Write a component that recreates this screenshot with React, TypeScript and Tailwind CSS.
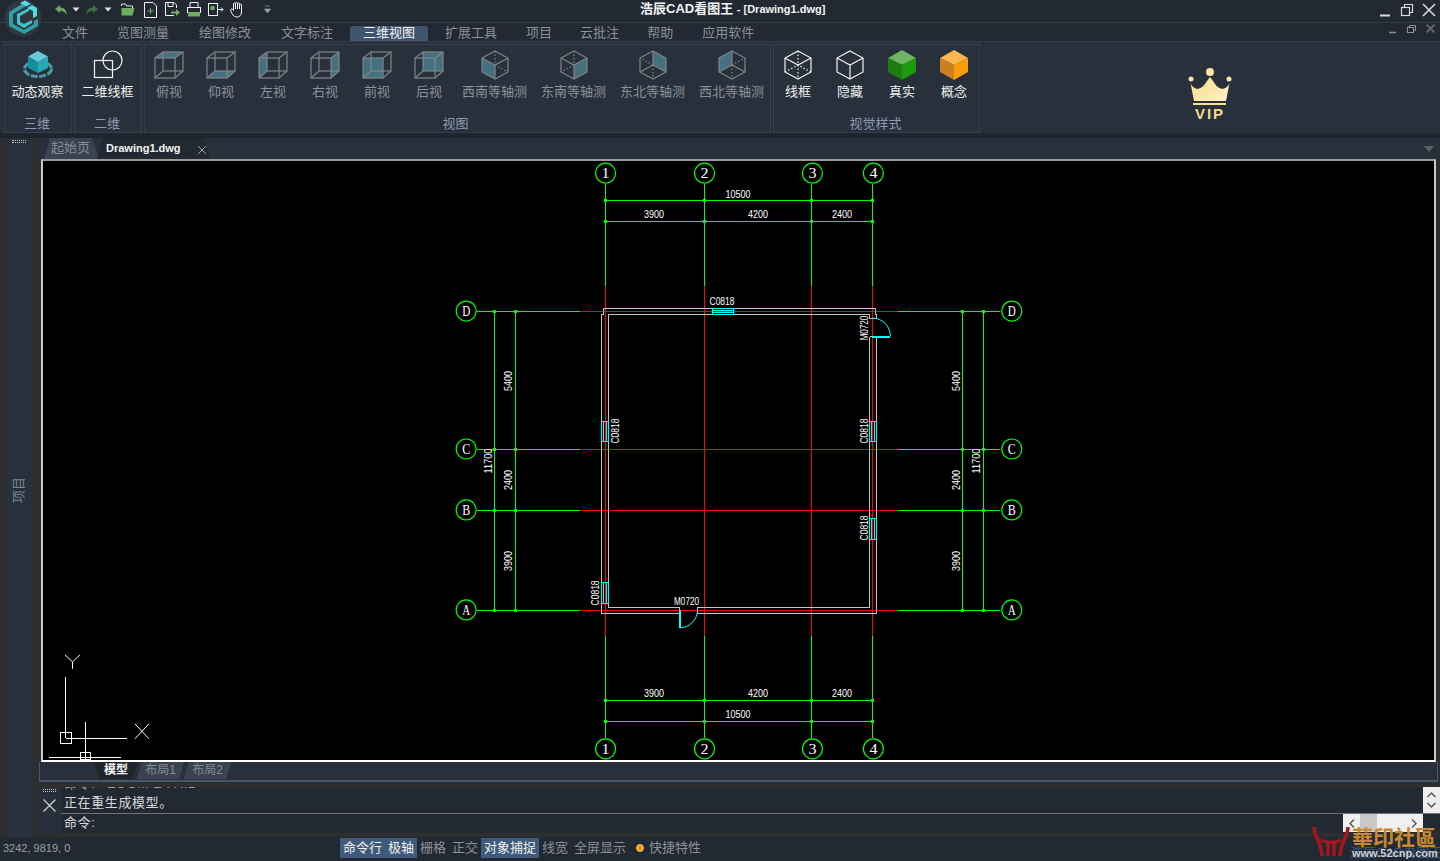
import type { ReactNode } from "react";

const STROKE = "#7f8488";
const FACE = "#44707f";

type Face = "top" | "bottom" | "left" | "right" | "front" | "back";

const faceShape: Record<Face, string> = {
  top: "1,7 9,1 29,1 21,7",
  bottom: "1,27 9,20 29,20 21,27",
  left: "1,7 9,1 9,20 1,27",
  right: "21,7 29,1 29,20 21,27",
  front: "1,7 21,7 21,27 1,27",
  back: "9,1 29,1 29,20 9,20",
};

function BoxIcon({ face }: { face: Face }) {
  return (
    <svg width="30" height="28" viewBox="0 0 30 28" fill="none" stroke={STROKE} strokeWidth="1.2">
      <polygon points={faceShape[face]} fill={FACE} stroke="none" />
      <rect x="1" y="7" width="20" height="20" />
      <rect x="9" y="1" width="20" height="19" />
      <path d="M1 7 9 1M21 7 29 1M21 27 29 20M1 27 9 20" />
    </svg>
  );
}

type Corner = "sw" | "se" | "ne" | "nw";

const cornerFill: Record<Corner, string> = {
  sw: "1,8 14,15 14,29 1,22",
  se: "27,8 14,15 14,29 27,22",
  ne: "14,1 27,8 27,22 14,15",
  nw: "14,1 1,8 1,22 14,15",
};

const cornerSolid: Record<Corner, string> = {
  sw: "M1 8 14 15 27 8M14 15V29",
  se: "M1 8 14 15 27 8M14 15V29",
  ne: "M14 1V15M1 22 14 15 27 22",
  nw: "M14 1V15M1 22 14 15 27 22",
};

const cornerDots: Record<Corner, string> = {
  sw: "M14 1V15M14 15 27 22",
  se: "M14 1V15M14 15 1 22",
  ne: "M14 15V29M14 15 1 8",
  nw: "M14 15V29M14 15 27 8",
};

function IsoIcon({ corner }: { corner: Corner }) {
  return (
    <svg width="28" height="30" viewBox="0 0 28 30" fill="none" stroke={STROKE} strokeWidth="1.2">
      <polygon points={cornerFill[corner]} fill={FACE} stroke="none" />
      <polygon points="14,1 27,8 27,22 14,29 1,22 1,8" />
      <path d={cornerSolid[corner]} />
      <path d={cornerDots[corner]} strokeDasharray="1.5 2" />
    </svg>
  );
}

function StyleIcon({ dots }: { dots: boolean }) {
  return (
    <svg width="28" height="30" viewBox="0 0 28 30" fill="none" stroke="#f2f2f2" strokeWidth="1.2">
      <polygon points="14,1 27,8 27,22 14,29 1,22 1,8" />
      {dots ? (
        <>
          <path d="M1 8 14 15 27 8" />
          <path d="M14 1V29M1 22 14 15 27 22" strokeDasharray="1.5 2" />
        </>
      ) : (
        <path d="M1 8 14 15 27 8M14 15V29" />
      )}
    </svg>
  );
}

function ColorCube({ top, left, right }: { top: string; left: string; right: string }) {
  return (
    <svg width="28" height="30" viewBox="0 0 28 30">
      <polygon points="14,0 28,8 14,15 0,8" fill={top} />
      <polygon points="0,8 14,15 14,30 0,22" fill={left} />
      <polygon points="28,8 14,15 14,30 28,22" fill={right} />
    </svg>
  );
}

function OrbitIcon() {
  return (
    <svg width="32" height="30" viewBox="0 0 32 30">
      <ellipse cx="16" cy="19" rx="13.5" ry="7.5" fill="none" stroke="#4b98a6" strokeWidth="3" strokeDasharray="7 1.5" />
      <polygon points="16,1 26,6.5 16,12 6,6.5" fill="#66cbd6" />
      <polygon points="6,6.5 16,12 16,23 6,18" fill="#12909e" />
      <polygon points="26,6.5 16,12 16,23 26,18" fill="#2aa7b5" />
    </svg>
  );
}

function WireIcon() {
  return (
    <svg width="30" height="30" viewBox="0 0 30 30" fill="none" stroke="#f2f2f2" strokeWidth="1.2">
      <rect x="1.5" y="10.5" width="18" height="17" />
      <circle cx="19.5" cy="10.5" r="9.5" />
    </svg>
  );
}

function RibbonItem({ icon, label, bright, wide }: { icon: ReactNode; label: string; bright?: boolean; wide?: boolean }) {
  return (
    <div className={`flex flex-col items-center shrink-0 ${wide ? "w-[79px]" : "w-[52px]"}`}>
      <div className="h-[30px] flex items-center justify-center mt-[5px]">{icon}</div>
      <span className={`mt-[3px] text-[13px] leading-[18px] whitespace-nowrap ${bright ? "text-[#f0f0f0]" : "text-[#8b9198]"}`}>{label}</span>
    </div>
  );
}

function RibbonGroup({ title, className, titleClass = "pr-[2px]", children }: { title: string; className: string; titleClass?: string; children: ReactNode }) {
  return (
    <div className={`h-[89px] border border-[#353e4a] flex flex-col ${className}`}>
      <div className="flex-1 flex justify-center pr-[1px]">{children}</div>
      <div className={`text-center text-[13px] leading-[18px] -mb-[1px] text-[#8c9bb0] ${titleClass}`}>{title}</div>
    </div>
  );
}

const menus = [
  { label: "文件", cls: "ml-[49px]" },
  { label: "览图测量", cls: "ml-[3px]" },
  { label: "绘图修改", cls: "ml-[4px]" },
  { label: "文字标注", cls: "ml-[4px]" },
  { label: "三维视图", cls: "ml-[4px] bg-[#3f556f] text-[#f2f2f2] rounded-t-[3px]" },
  { label: "扩展工具", cls: "ml-[4px]" },
  { label: "项目", cls: "ml-[3px]" },
  { label: "云批注", cls: "ml-[2px]" },
  { label: "帮助", cls: "ml-[2px]" },
  { label: "应用软件", cls: "ml-[3px]" },
];

const boxViews: { label: string; face: Face }[] = [
  { label: "俯视", face: "top" },
  { label: "仰视", face: "bottom" },
  { label: "左视", face: "left" },
  { label: "右视", face: "right" },
  { label: "前视", face: "front" },
  { label: "后视", face: "back" },
];

const isoViews: { label: string; corner: Corner }[] = [
  { label: "西南等轴测", corner: "sw" },
  { label: "东南等轴测", corner: "se" },
  { label: "东北等轴测", corner: "ne" },
  { label: "西北等轴测", corner: "nw" },
];

function Caret() {
  return (
    <svg width="8" height="5" viewBox="0 0 8 5">
      <path d="M0.5 0.5H7.5L4 4.5Z" fill="#e6e6e6" />
    </svg>
  );
}

function QuickBar() {
  return (
    <div className="flex items-center ml-[55px] h-[17px] mt-[1px]">
      <svg width="12" height="10" viewBox="0 0 12 10">
        <path d="M0 4 5 0V2.5C9 2.5 12 5 11.5 10 10 7 8 5.8 5 5.8V8Z" fill="#6ea864" />
      </svg>
      <span className="ml-[5px] flex"><Caret /></span>
      <svg width="12" height="10" viewBox="0 0 12 10" className="ml-[6px]">
        <path d="M12 4 7 0V2.5C3 2.5 0 5 .5 10 2 7 4 5.8 7 5.8V8Z" fill="#3f6d42" />
      </svg>
      <span className="ml-[6px] flex"><Caret /></span>
      <svg width="14" height="13" viewBox="0 0 14 13" className="ml-[9px]">
        <path d="M.5 3V1h4l1 2h6v2" fill="none" stroke="#e6e6e6" />
        <path d="M.5 12.5V5h13l-2 7.5Z" fill="#6fae5f" />
      </svg>
      <svg width="13" height="16" viewBox="0 0 13 16" className="ml-[9px]" fill="none">
        <path d="M.5.5H9L12.5 4V15.5H.5Z" stroke="#f2f2f2" />
        <path d="M6.5 6V12M3.5 9H9.5" stroke="#6fae5f" />
      </svg>
      <svg width="15" height="15" viewBox="0 0 15 15" className="ml-[8px]" fill="none">
        <path d="M9 13.5H.5V.5H9L11.5 3V6" stroke="#f2f2f2" />
        <path d="M3 .5V4.5H8V.5" stroke="#f2f2f2" />
        <path d="M6 9.5H11V7L15 10.5 11 14V11.5H6Z" fill="#6fae5f" />
      </svg>
      <svg width="14" height="15" viewBox="0 0 14 15" className="ml-[7px]" fill="none">
        <path d="M3 5V.5H11V5" stroke="#f2f2f2" />
        <rect x=".5" y="5.5" width="13" height="5" stroke="#f2f2f2" />
        <rect x="1" y="10" width="12" height="4.5" fill="#6fae5f" />
      </svg>
      <svg width="16" height="13" viewBox="0 0 16 13" className="ml-[7px]" fill="none">
        <rect x=".5" y=".5" width="9" height="12" stroke="#f2f2f2" />
        <rect x="2.5" y="3" width="4" height="4" fill="#6fae5f" />
        <path d="M10 6.5H15M13 4.5 15 6.5 13 8.5" stroke="#f2f2f2" />
      </svg>
      <svg width="14" height="17" viewBox="0 0 14 17" className="ml-[6px]" fill="none" stroke="#f2f2f2">
        <path d="M3.5 9V3a1 1 0 0 1 2 0V8M5.5 2.5a1 1 0 0 1 2 0V8M7.5 3a1 1 0 0 1 2 0V8M9.5 4a1 1 0 0 1 2 0v7c0 3-2 5-4.5 5S3.500 15 2 12.500L.7 9.500C.2 8 2 7 3.500 9.500" />
      </svg>
      <svg width="7" height="9" viewBox="0 0 7 9" className="ml-[20px]">
        <path d="M1 1H6M.5 4H6.500L3.500 8Z" stroke="#9aa0a6" fill="#9aa0a6" strokeWidth=".7" />
      </svg>
    </div>
  );
}

function Crown() {
  return (
    <svg width="44" height="38" viewBox="0 0 44 38">
      <defs>
        <linearGradient id="gold" x1="0" y1="0" x2="1" y2="1">
          <stop offset="0" stopColor="#f7dc8c" />
          <stop offset="0.55" stopColor="#fbe7a8" />
          <stop offset="1" stopColor="#fff2cf" />
        </linearGradient>
      </defs>
      <circle cx="22" cy="4" r="4" fill="#fbe7a8" />
      <circle cx="3" cy="11" r="2.500" fill="#fbe7a8" />
      <circle cx="41" cy="11" r="2.500" fill="#fbe7a8" />
      <path d="M2.500 15C5 21 12 25 19 13L22 9 25 13C32 25 39 21 41.500 15L38 33H6Z" fill="url(#gold)" />
      <rect x="5" y="35" width="33" height="2" fill="#f9e08e" />
    </svg>
  );
}

function Ribbon() {
  return (
    <div className="h-[92px] bg-[#28303b] flex items-start pt-[2px] pl-[4px] shrink-0 border-t border-[#333c48]">
      <RibbonGroup title="三维" className="w-[68px]">
        <RibbonItem bright label="动态观察" icon={<OrbitIcon />} />
      </RibbonGroup>
      <RibbonGroup title="二维" className="w-[68px] ml-[2px]">
        <RibbonItem bright label="二维线框" icon={<WireIcon />} />
      </RibbonGroup>
      <RibbonGroup title="视图" titleClass="pr-[4px]" className="w-[627px] ml-[2px]">
        {boxViews.map((v) => (
          <RibbonItem key={v.label} label={v.label} icon={<BoxIcon face={v.face} />} />
        ))}
        {isoViews.map((v) => (
          <RibbonItem key={v.label} wide label={v.label} icon={<IsoIcon corner={v.corner} />} />
        ))}
      </RibbonGroup>
      <RibbonGroup title="视觉样式" className="w-[207px] ml-[2px]">
        <RibbonItem bright label="线框" icon={<StyleIcon dots />} />
        <RibbonItem bright label="隐藏" icon={<StyleIcon dots={false} />} />
        <RibbonItem bright label="真实" icon={<ColorCube top="#6db562" left="#1e7d12" right="#1c9a0c" />} />
        <RibbonItem bright label="概念" icon={<ColorCube top="#fcb74c" left="#c98022" right="#fc9c0a" />} />
      </RibbonGroup>
      <div className="ml-[208px] mt-[24px] flex flex-col items-center w-[44px]">
        <Crown />
        <span className="text-[15px] leading-[15px] font-bold tracking-[2px] text-[#f4d98a]">VIP</span>
      </div>
    </div>
  );
}

const COLS = [605.5, 704.5, 812.5, 873.5];
const ROWS = [311.5, 449.5, 510.5, 610.5];
const G = "#00ff00";
const R = "#ff0000";
const W = "#c4c4c4";
const C = "#00ffff";

function Label({ x, y, t, rot, size = 11 }: { x: number; y: number; t: string; rot?: boolean; size?: number }) {
  return (
    <text
      x={x}
      y={y + 4}
      textAnchor="middle"
      fill="#ffffff"
      fontSize={size}
      textLength={t.length * 5}
      lengthAdjust="spacingAndGlyphs"
      transform={rot ? `rotate(-90 ${x} ${y})` : undefined}
      className="font-['Liberation_Sans',sans-serif]"
    >
      {t}
    </text>
  );
}

function Bubble({ x, y, t }: { x: number; y: number; t: string }) {
  return (
    <g>
      <circle cx={x} cy={y} r="10" fill="#000" stroke={G} strokeWidth="1.200" />
      <text x={x} y={y + 5} textAnchor="middle" fill="#fff" fontSize="15" textLength="8" lengthAdjust="spacingAndGlyphs" className="font-['Liberation_Serif',serif]">
        {t}
      </text>
    </g>
  );
}

function Tick({ x, y }: { x: number; y: number }) {
  return <rect x={x - 1.5} y={y - 1.5} width="3" height="3" fill={G} />;
}

function Drawing() {
  return (
    <svg viewBox="43 161 1392 599" className="block w-full h-full" shapeRendering="crispEdges" fill="none">
      {/* grid axes */}
      {COLS.map((x) => (
        <g key={x}>
          <path d={`M${x} 184V286M${x} 636V738`} stroke={G} />
          <path d={`M${x} 286V636`} stroke={R} />
        </g>
      ))}
      {ROWS.map((y) => (
        <g key={y}>
          <path d={`M477 ${y}H580M899 ${y}H1001`} stroke={G} />
          <path d={`M580 ${y}H899`} stroke={R} />
        </g>
      ))}

      {/* dimension lines */}
      <path d="M604 200.500H875M604 221.500H875M604 700.500H875M604 721.500H875" stroke={G} />
      <path d="M494.500 310V612M515.500 310V612M963.500 310V612M984.500 310V612" stroke={G} />
      {[200.5, 221.5, 700.5, 721.5].flatMap((y) =>
        COLS.map((x) => <Tick key={`${x}-${y}`} x={x} y={y} />)
      )}
      {ROWS.flatMap((y) =>
        [494.5, 515.5, 963.5, 984.5].map((x) => <Tick key={`${x}-${y}`} x={x} y={y} />)
      )}

      {/* walls */}
      <path
        d="M679.500 613.500H601.500V314.500H603.500V308.500H876.500V314.500H877.500V318.500H870.500V314.500H608.500V607.500H679.500V613.500M697.500 613.500H877.500V336.500H870.500V607.500H697.500V613.500"
        stroke={W}
      />

      {/* windows */}
      <rect x="712.500" y="308.500" width="21" height="6" stroke={C} />
      <path d="M713 310.500H733M713 312.500H733" stroke={C} />
      {[
        [601.5, 421.5, 20],
        [870.5, 421.5, 20],
        [870.5, 518.5, 21],
        [601.5, 582.5, 21],
      ].map(([x, y, h]) => (
        <g key={`${x}-${y}`}>
          <rect x={x} y={y} width="7" height={h} stroke={C} />
          <path d={`M${x + 2} ${y}v${h}M${x + 5} ${y}v${h}`} stroke={C} />
        </g>
      ))}

      {/* doors */}
      <path d="M873 336.500H891" stroke={C} strokeWidth="2" />
      <path d="M873 318A18 18 0 0 1 891 336" stroke={C} shapeRendering="auto" />
      <path d="M680.500 610V628" stroke={C} strokeWidth="2" />
      <path d="M680 628A18 18 0 0 0 698 610" stroke={C} shapeRendering="auto" />

      {/* labels */}
      <g shapeRendering="auto">
        <Label x={722.5} y={301} t="C0818" />
        <Label x={615} y={431} t="C0818" rot />
        <Label x={864.5} y={431} t="C0818" rot />
        <Label x={864.5} y={528} t="C0818" rot />
        <Label x={864.5} y={328} t="M0720" rot />
        <Label x={595} y={593} t="C0818" rot />
        <Label x={687} y={601} t="M0720" />
        <Label x={738.5} y={194} t="10500" />
        <Label x={654.5} y={214} t="3900" />
        <Label x={758.5} y={214} t="4200" />
        <Label x={842.5} y={214} t="2400" />
        <Label x={654.5} y={693} t="3900" />
        <Label x={758.5} y={693} t="4200" />
        <Label x={842.5} y={693} t="2400" />
        <Label x={738.5} y={714} t="10500" />
        <Label x={508} y={381} t="5400" rot />
        <Label x={508} y={480} t="2400" rot />
        <Label x={508} y={561} t="3900" rot />
        <Label x={488} y={461} t="11700" rot />
        <Label x={957} y={381} t="5400" rot />
        <Label x={957} y={480} t="2400" rot />
        <Label x={957} y={561} t="3900" rot />
        <Label x={977} y={461} t="11700" rot />

        {["1", "2", "3", "4"].map((t, i) => (
          <g key={t}>
            <Bubble x={COLS[i] + 0.5} y={173} t={t} />
            <Bubble x={COLS[i] + 0.5} y={749} t={t} />
          </g>
        ))}
        {["D", "C", "B", "A"].map((t, i) => (
          <g key={t}>
            <Bubble x={466.5} y={ROWS[i] - 0.5} t={t} />
            <Bubble x={1012.5} y={ROWS[i] - 0.5} t={t} />
          </g>
        ))}
      </g>

      {/* ucs icon and crosshair */}
      <path d="M65.500 677V738M66 738.500H127M85.500 722V760M49 757.500H121" stroke="#fff" />
      <rect x="60.500" y="732.500" width="11" height="11" stroke="#fff" />
      <rect x="80.500" y="752.500" width="10" height="7" stroke="#fff" />
      <path d="M65 655 72.500 662 80 655M72.500 662V669M135 724 149 739M149 724 135 739" stroke="#fff" shapeRendering="auto" />
    </svg>
  );
}

function Grip({ className }: { className: string }) {
  return <div className={`h-[3px] border-y border-dotted border-[#c8c8c8] ${className}`} />;
}

function WindowButtons() {
  return (
    <svg width="56" height="14" viewBox="0 0 56 14" fill="none" stroke="#d8d8d8" strokeWidth="1.600">
      <path d="M0 12.500H10" strokeWidth="2" />
      <rect x="21.500" y="4.500" width="8" height="8" strokeWidth="1.200" />
      <path d="M24.500 4V1.500H32.500V9.500H30" strokeWidth="1.200" />
      <path d="M43 1 55 13M55 1 43 13" />
    </svg>
  );
}

function DocButtons() {
  return (
    <svg width="47" height="10" viewBox="0 0 47 10" fill="none" stroke="#8e9299">
      <path d="M0 8.500H7" strokeWidth="1.500" />
      <rect x="18.500" y="3.500" width="6" height="5" />
      <path d="M20.500 3V1.500H26.500V6.500H25" />
      <path d="M37.500 .5 45.500 8.500M45.500 .5 37.500 8.500" stroke="#62666b" strokeWidth="2" />
    </svg>
  );
}

function Watermark() {
  return (
    <div className="absolute left-[1312px] top-[825px] w-[128px] h-[36px] pointer-events-none">
      <svg width="38" height="34" viewBox="0 0 38 34" fill="none" stroke="#a5161d" strokeWidth="3.500" className="absolute left-0 top-0">
        <path d="M2 2C2 12 9 15 10 31M36 2C36 12 29 15 28 31M9 15C15 18 23 18 29 15M16 17V31M22 17V31" />
      </svg>
      <span className="absolute left-[38px] top-[21px] text-[13px] leading-[14px] text-[#3a5a86] whitespace-nowrap">浩辰CAD看图王</span>
      <span className="absolute left-[40px] top-[-2px] text-[21px] leading-[26px] font-bold text-[#c88a30] whitespace-nowrap font-['Noto_Sans_CJK_TC',sans-serif]">華印社區</span>
      <span className="absolute left-[40px] top-[21px] text-[11px] leading-[14px] font-bold text-[#cfcfcf] whitespace-nowrap">www.52cnp.com</span>
    </div>
  );
}

export default function App() {
  return (
    <div className="relative w-[1440px] h-[861px] overflow-hidden flex flex-col bg-[#2e2e2e] font-['Liberation_Sans','Noto_Sans_CJK_SC',sans-serif]">
      {/* app logo sits over title and menu */}
      <svg width="38" height="38" viewBox="0 0 38 38" className="absolute left-[4px] top-0 z-10">
        <circle cx="19" cy="18" r="18.500" fill="#30373f" />
        <path d="M5 12 18 4 22 6 9 14V24L20 30 30 24V21L34 19V26L20 34 5 26Z" fill="#2f9ea7" />
        <path d="M16 3 21 .5 27 4 22 6.500ZM23 8 28 5 33 8 33 16 29 18V11Z" fill="#50dce0" />
        <path d="M13 14 25 8V11L16 16V22L20 24 28 20V23L20 28 13 24Z" fill="#3fc4cb" />
      </svg>

      {/* title bar */}
      <div className="h-[23px] shrink-0 bg-[#222932] flex items-start border-b border-[#343c47]">
        <QuickBar />
        <div className="ml-[369px] text-[13px] leading-[17px] font-bold text-[#f4f4f4] whitespace-nowrap">
          浩辰CAD看图王 <span className="text-[11px] font-bold"> - [Drawing1.dwg]</span>
        </div>
        <div className="ml-auto mr-[4px] mt-[3px] flex">
          <WindowButtons />
        </div>
      </div>

      {/* menu row */}
      <div className="h-[18px] shrink-0 bg-[#222932] flex items-start">
        {menus.map((m) => (
          <div key={m.label} className={`mt-[3px] h-[15px] px-[13px] text-[13px] leading-[14px] text-[#8b9198] whitespace-nowrap ${m.cls}`}>
            {m.label}
          </div>
        ))}
        <div className="ml-auto mr-[4px] mt-[1px] flex">
          <DocButtons />
        </div>
      </div>

      <Ribbon />

      <div className="h-[5px] shrink-0 bg-[#1f252c]" />

      {/* workspace */}
      <div className="flex-1 min-h-0 flex">
        <div className="w-[38px] shrink-0 flex">
          <div className="ml-[4px] w-[30px] h-[699px] bg-[#28303b] flex flex-col items-center">
            <Grip className="w-[14px] mt-[2px]" />
            <div className="flex-1 flex items-center justify-center">
              <span className="-rotate-90 ml-[1px] text-[13px] leading-[14px] text-[#7d8590]">项目</span>
            </div>
          </div>
        </div>

        <div className="flex-1 min-w-0 flex flex-col">
          {/* drawing tabs */}
          <div className="h-[21px] shrink-0 bg-[#28303b] flex items-center ml-[2px] pl-[2px]">
            <div className="w-[57px] h-[21px] bg-[#39424e] [clip-path:polygon(4%_100%,14%_0,88%_0,100%_100%)] text-center text-[13px] leading-[20px] text-[#878d94]">
              起始页
            </div>
            <div className="w-[113px] h-[21px] -ml-[2px] bg-[#222932] [clip-path:polygon(0_100%,5%_0,94%_0,100%_100%)] flex items-center text-[11px] font-bold text-[#f4f4f4]">
              <span className="ml-[9px]">Drawing1.dwg</span>
              <svg width="8" height="8" viewBox="0 0 8 8" className="ml-[17px] mt-[2px]" stroke="#9aa0a6">
                <path d="M0 0 8 8M8 0 0 8" />
              </svg>
            </div>
            <svg width="10" height="6" viewBox="0 0 10 6" className="ml-auto mr-[6px]">
              <path d="M0 0H10L5 6Z" fill="#5c6168" />
            </svg>
          </div>

          {/* canvas */}
          <div className="h-[603px] shrink-0 ml-[3px] mr-[4px] bg-black border-2 border-[#c9c9c9] border-t-[#9a9a9a] border-b-white box-border">
            <Drawing />
          </div>

          {/* layout tabs */}
          <div className="h-[20px] shrink-0 ml-[1px] mr-[2px] bg-[#28303b] border-x border-b-2 border-[#46566b] flex pl-[54px] text-[12px] leading-[16px]">
            <div className="w-[44px] h-[17px] text-center font-bold text-[#f4f4f4] bg-[#1f262e] [clip-path:polygon(0_0,100%_0,88%_100%,12%_100%)]">模型</div>
            <div className="w-[47px] h-[17px] -ml-[1px] text-center text-[#858b92] bg-[#3a4450] [clip-path:polygon(10%_0,100%_0,90%_100%,0_100%)]">布局1</div>
            <div className="w-[47px] h-[17px] text-center text-[#858b92] bg-[#3a4450] [clip-path:polygon(10%_0,100%_0,90%_100%,0_100%)]">布局2</div>
          </div>

          <div className="h-[5px] shrink-0 bg-[#2e2e2e]" />

          {/* command window */}
          <div className="h-[46px] shrink-0 flex">
            <div className="w-[23px] shrink-0 bg-[#27303a] flex flex-col items-center">
              <Grip className="w-[13px] mt-[2px]" />
              <svg width="13" height="13" viewBox="0 0 13 13" className="mt-[7px]" stroke="#d0d0d0" strokeWidth="1.200">
                <path d="M.5 .5 12.500 12.500M12.500 .5 .5 12.500" />
              </svg>
            </div>
            <div className="flex-1 min-w-0 flex flex-col bg-[#222932]">
              <div className="h-[27px] shrink-0 border-b border-[#6e7277] flex pl-[3px] overflow-hidden">
                <div className="flex flex-col text-[13px] leading-[19px] text-[#d6d8da] tracking-[0.6px] whitespace-nowrap">
                  <span className="h-[3px] overflow-hidden flex items-end leading-[13px] text-[#9aa0a6]">命令: _ZOOM E FAIL</span>
                  <span className="mt-[3px]">正在重生成模型。</span>
                </div>
                <div className="ml-auto w-[17px] bg-[#eeeeee] flex flex-col items-center justify-center gap-[4px]">
                  <svg width="9" height="6" viewBox="0 0 9 6" fill="none" stroke="#555" strokeWidth="1.400"><path d="M.5 5 4.500 1 8.500 5" /></svg>
                  <svg width="9" height="6" viewBox="0 0 9 6" fill="none" stroke="#555" strokeWidth="1.400"><path d="M.5 1 4.500 5 8.500 1" /></svg>
                </div>
              </div>
              <div className="flex-1 flex pl-[3px] text-[13px] leading-[18px] text-[#d6d8da] tracking-[0.6px]">
                <span>命令:</span>
                <div className="ml-auto mr-[17px] w-[80px] h-[18px] bg-[#f0f0f0] flex items-center">
                  <svg width="6" height="9" viewBox="0 0 6 9" fill="none" stroke="#555" strokeWidth="1.400" className="ml-[6px]"><path d="M5 .5 1 4.500 5 8.500" /></svg>
                  <div className="w-[17px] h-[18px] ml-[5px] bg-[#c8c8c8]" />
                  <svg width="6" height="9" viewBox="0 0 6 9" fill="none" stroke="#555" strokeWidth="1.400" className="ml-auto mr-[6px]"><path d="M1 .5 5 4.500 1 8.500" /></svg>
                </div>
              </div>
            </div>
          </div>
          <div className="h-[4px] shrink-0 bg-[#2e2e2e]" />
        </div>
      </div>

      {/* status bar */}
      <div className="h-[24px] shrink-0 bg-[#222932] flex items-start pt-[1px] text-[13px] leading-[19px] text-[#8b9198] whitespace-nowrap">
        <span className="ml-[3px] w-[337px] text-[11px] leading-[21px] text-[#9aa0a6]">3242, 9819, 0</span>
        <div className="h-[20px] w-[77px] bg-[#3f5a7a] text-[#f0f0f0] flex justify-between px-[3px]">
          <span>命令行</span>
          <span>极轴</span>
        </div>
        <span className="ml-[3px]">栅格</span>
        <span className="ml-[6px]">正交</span>
        <div className="ml-[3px] h-[20px] w-[58px] bg-[#3f5a7a] text-[#f0f0f0] text-center">对象捕捉</div>
        <span className="ml-[3px]">线宽</span>
        <span className="ml-[6px]">全屏显示</span>
        <span className="ml-[10px] mt-[6px] w-[8px] h-[8px] rounded-full bg-[#f29a12] border border-[#f7c66b]" />
        <span className="ml-[5px]">快捷特性</span>
      </div>

      <Watermark />
    </div>
  );
}
